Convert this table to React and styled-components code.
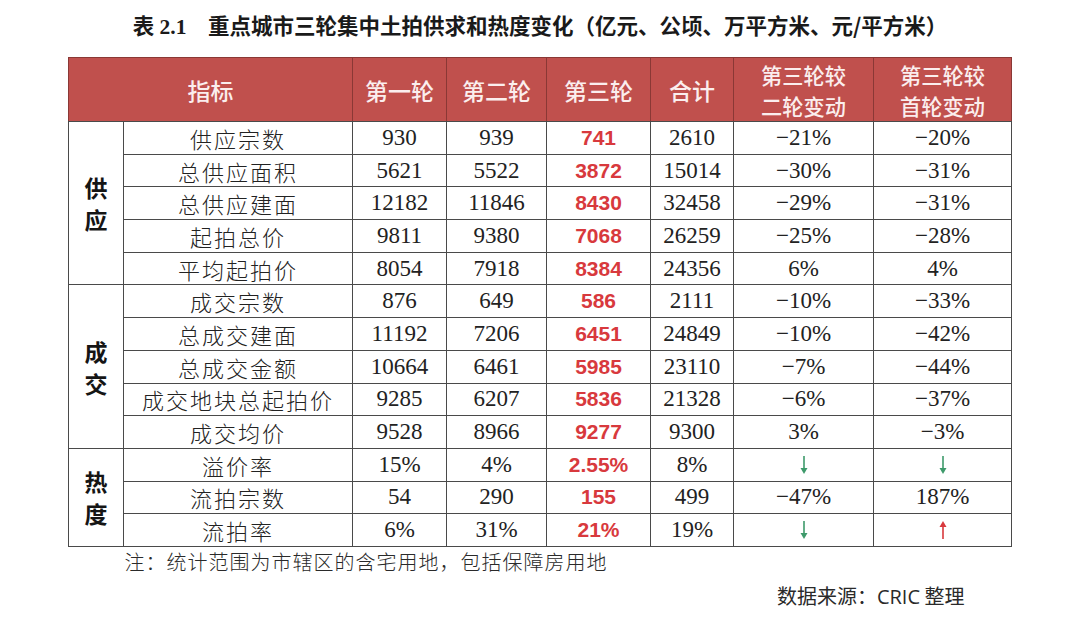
import React from "react";
import styled, { createGlobalStyle } from "styled-components";

const GlobalStyle = createGlobalStyle`
  html, body {
    margin: 0;
    padding: 0;
    background: #ffffff;
  }
`;

const Page = styled.div`
  width: 1080px;
  height: 627px;
  display: flex;
  flex-direction: column;
  align-items: center;
  box-sizing: border-box;
  padding-top: 10px;
  color: #1f1f1f;
`;

const Title = styled.div`
  height: 30px;
  line-height: 30px;
  font-family: "Liberation Serif", "Noto Sans CJK SC", serif;
  font-weight: 700;
  font-size: 21.5px;
  color: #1a1a1a;
  margin-bottom: 17px;
  white-space: pre;
`;

const TitleCjk = styled.span`
  font-family: "Noto Sans CJK SC", sans-serif;
`;

const Table = styled.table`
  width: 943px;
  border-collapse: collapse;
  table-layout: fixed;
  border: 1.5px solid #4a4a4a;
`;

const HeadRow = styled.tr`
  height: 64px;
  background: #c0504d;
`;

const HeadCell = styled.th`
  padding: 0;
  border: 1px solid #8a3835;
  border-bottom: 1.5px solid #4a4a4a;
  color: #fbeeee;
  font-family: "Noto Sans CJK SC", sans-serif;
  font-weight: 500;
  font-size: 23px;
  line-height: 30px;
  text-align: center;
  vertical-align: middle;
`;

const HeadLine = styled.div`
  height: 31px;
  font-size: 21.2px;
  line-height: 31px;
  white-space: nowrap;
`;

const Row = styled.tr`
  height: 32.7px;
`;

const GroupCell = styled.td`
  padding: 0;
  border: 1.5px solid #4a4a4a;
  font-family: "Noto Sans CJK SC", sans-serif;
  font-weight: 700;
  font-size: 23px;
  line-height: 32px;
  text-align: center;
  vertical-align: middle;
  color: #151515;
`;

const LabelCell = styled.td`
  padding: 0;
  border: 1.5px solid #4a4a4a;
  font-family: "Noto Sans CJK SC", sans-serif;
  font-weight: 300;
  font-size: 22px;
  letter-spacing: 2px;
  line-height: 30px;
  text-align: center;
  color: #222;
`;

const NumCell = styled.td`
  padding: 0;
  border: 1.5px solid #4a4a4a;
  font-family: ${({ $hot }) =>
    $hot ? '"Liberation Sans", Arial, sans-serif' : '"Liberation Serif", serif'};
  font-weight: ${({ $hot }) => ($hot ? 700 : 400)};
  font-size: ${({ $hot }) => ($hot ? "21px" : "23px")};
  color: ${({ $hot }) => ($hot ? "#d8393d" : "#222")};
  line-height: 30px;
  text-align: center;
  vertical-align: middle;
`;

const Footer = styled.div`
  width: 943px;
  display: flex;
  flex-direction: column;
`;

const Note = styled.div`
  height: 30px;
  line-height: 30px;
  padding-left: 56px;
  font-family: "Noto Sans CJK SC", sans-serif;
  font-weight: 300;
  font-size: 20px;
  letter-spacing: 1px;
  color: #2a2a2a;
`;

const Source = styled.div`
  align-self: flex-end;
  margin-top: 4px;
  padding-right: 47px;
  height: 30px;
  line-height: 30px;
  font-family: "Noto Sans CJK SC", sans-serif;
  font-size: 20px;
  color: #2a2a2a;
`;

const Latin = styled.span`
  font-family: "Open Sans", "Liberation Sans", sans-serif;
`;

const ArrowSvg = styled.svg`
  display: block;
  margin: 0 auto;
`;

const Arrow = ({ up }) => {
  const color = up ? "#d8393d" : "#3e9a6b";
  return (
    <ArrowSvg width="10" height="20" viewBox="0 0 10 20">
      {up ? (
        <>
          <line x1="5" y1="19" x2="5" y2="5" stroke={color} strokeWidth="1.6" />
          <polygon points="5,1 8.5,7 1.5,7" fill={color} />
        </>
      ) : (
        <>
          <line x1="5" y1="1" x2="5" y2="15" stroke={color} strokeWidth="1.6" />
          <polygon points="5,19 8.5,13 1.5,13" fill={color} />
        </>
      )}
    </ArrowSvg>
  );
};

const groups = [
  {
    name: ["供", "应"],
    rows: [
      ["供应宗数", "930", "939", "741", "2610", "−21%", "−20%"],
      ["总供应面积", "5621", "5522", "3872", "15014", "−30%", "−31%"],
      ["总供应建面", "12182", "11846", "8430", "32458", "−29%", "−31%"],
      ["起拍总价", "9811", "9380", "7068", "26259", "−25%", "−28%"],
      ["平均起拍价", "8054", "7918", "8384", "24356", "6%", "4%"],
    ],
  },
  {
    name: ["成", "交"],
    rows: [
      ["成交宗数", "876", "649", "586", "2111", "−10%", "−33%"],
      ["总成交建面", "11192", "7206", "6451", "24849", "−10%", "−42%"],
      ["总成交金额", "10664", "6461", "5985", "23110", "−7%", "−44%"],
      ["成交地块总起拍价", "9285", "6207", "5836", "21328", "−6%", "−37%"],
      ["成交均价", "9528", "8966", "9277", "9300", "3%", "−3%"],
    ],
  },
  {
    name: ["热", "度"],
    rows: [
      ["溢价率", "15%", "4%", "2.55%", "8%", "down", "down"],
      ["流拍宗数", "54", "290", "155", "499", "−47%", "187%"],
      ["流拍率", "6%", "31%", "21%", "19%", "down", "up"],
    ],
  },
];

const renderChange = (v) => {
  if (v === "down") return <Arrow />;
  if (v === "up") return <Arrow up />;
  return v;
};

export default function App() {
  return (
    <>
      <GlobalStyle />
      <Page>
        <Title>
          表 2.1　<TitleCjk>重点城市三轮集中土拍供求和热度变化（亿元、公顷、万平方米、元/平方米）</TitleCjk>
        </Title>
        <Table>
          <colgroup>
            <col style={{ width: 55 }} />
            <col style={{ width: 229 }} />
            <col style={{ width: 94 }} />
            <col style={{ width: 100 }} />
            <col style={{ width: 104 }} />
            <col style={{ width: 83 }} />
            <col style={{ width: 140 }} />
            <col style={{ width: 138 }} />
          </colgroup>
          <thead>
            <HeadRow>
              <HeadCell colSpan={2}>指标</HeadCell>
              <HeadCell>第一轮</HeadCell>
              <HeadCell>第二轮</HeadCell>
              <HeadCell>第三轮</HeadCell>
              <HeadCell>合计</HeadCell>
              <HeadCell>
                <HeadLine>第三轮较</HeadLine>
                <HeadLine>二轮变动</HeadLine>
              </HeadCell>
              <HeadCell>
                <HeadLine>第三轮较</HeadLine>
                <HeadLine>首轮变动</HeadLine>
              </HeadCell>
            </HeadRow>
          </thead>
          <tbody>
            {groups.map((g) =>
              g.rows.map((r, i) => (
                <Row key={r[0]}>
                  {i === 0 && (
                    <GroupCell rowSpan={g.rows.length}>
                      {g.name[0]}
                      <br />
                      {g.name[1]}
                    </GroupCell>
                  )}
                  <LabelCell>{r[0]}</LabelCell>
                  <NumCell>{r[1]}</NumCell>
                  <NumCell>{r[2]}</NumCell>
                  <NumCell $hot>{r[3]}</NumCell>
                  <NumCell>{r[4]}</NumCell>
                  <NumCell>{renderChange(r[5])}</NumCell>
                  <NumCell>{renderChange(r[6])}</NumCell>
                </Row>
              ))
            )}
          </tbody>
        </Table>
        <Footer>
          <Note>注：统计范围为市辖区的含宅用地，包括保障房用地</Note>
          <Source>
            数据来源：<Latin>CRIC</Latin> 整理
          </Source>
        </Footer>
      </Page>
    </>
  );
}
